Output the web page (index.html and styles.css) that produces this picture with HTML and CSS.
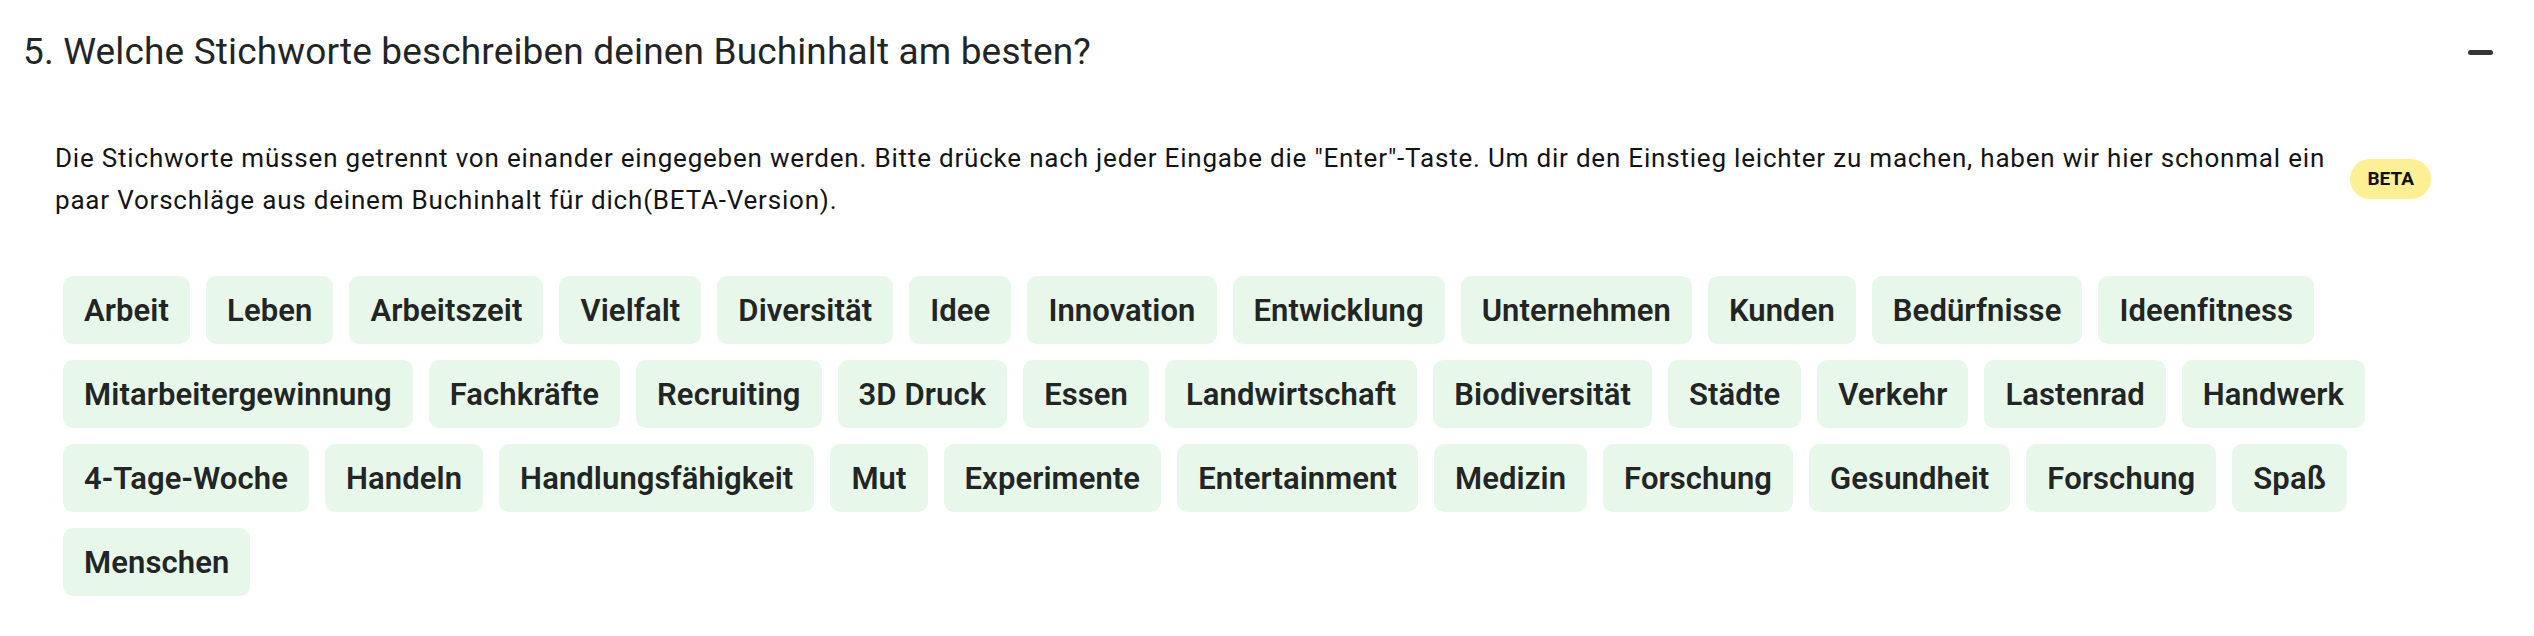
FILE: index.html
```html
<!DOCTYPE html>
<html lang="de">
<head>
<meta charset="utf-8">
<title>Stichworte</title>
<link rel="stylesheet" href="styles.css">
</head>
<body>
<section class="question">
  <header class="q-head">
    <h2 class="q-title">5. Welche Stichworte beschreiben deinen Buchinhalt am besten?</h2>
    <button class="toggle" type="button" aria-label="Einklappen"><span class="minus"></span></button>
  </header>
  <div class="q-body">
    <div class="intro">
      <p class="intro-text">Die Stichworte müssen getrennt von einander eingegeben werden. Bitte drücke nach jeder Eingabe die "Enter"-Taste. Um dir den Einstieg leichter zu machen, haben wir hier schonmal ein paar Vorschläge aus deinem Buchinhalt für dich(BETA-Version).</p>
      <span class="badge">BETA</span>
    </div>
    <ul class="tags">
      <li class="tag">Arbeit</li>
      <li class="tag">Leben</li>
      <li class="tag">Arbeitszeit</li>
      <li class="tag">Vielfalt</li>
      <li class="tag">Diversität</li>
      <li class="tag">Idee</li>
      <li class="tag">Innovation</li>
      <li class="tag">Entwicklung</li>
      <li class="tag">Unternehmen</li>
      <li class="tag">Kunden</li>
      <li class="tag">Bedürfnisse</li>
      <li class="tag">Ideenfitness</li>
      <li class="tag">Mitarbeitergewinnung</li>
      <li class="tag">Fachkräfte</li>
      <li class="tag">Recruiting</li>
      <li class="tag">3D Druck</li>
      <li class="tag">Essen</li>
      <li class="tag">Landwirtschaft</li>
      <li class="tag">Biodiversität</li>
      <li class="tag">Städte</li>
      <li class="tag">Verkehr</li>
      <li class="tag">Lastenrad</li>
      <li class="tag">Handwerk</li>
      <li class="tag">4-Tage-Woche</li>
      <li class="tag">Handeln</li>
      <li class="tag">Handlungsfähigkeit</li>
      <li class="tag">Mut</li>
      <li class="tag">Experimente</li>
      <li class="tag">Entertainment</li>
      <li class="tag">Medizin</li>
      <li class="tag">Forschung</li>
      <li class="tag">Gesundheit</li>
      <li class="tag">Forschung</li>
      <li class="tag">Spaß</li>
      <li class="tag">Menschen</li>
    </ul>
  </div>
</section>
</body>
</html>
```

FILE: styles.css
```css
* { box-sizing: border-box; }

html, body {
  margin: 0;
  padding: 0;
  background: #ffffff;
}

body {
  font-family: Roboto, "Liberation Sans", Arial, sans-serif;
  color: #222222;
}

.question {
  width: 2534px;
  padding-bottom: 32px;
}

.q-head {
  display: flex;
  align-items: center;
  justify-content: space-between;
  padding: 30px 41px 30px 23px;
}

.q-title {
  margin: 0;
  font-size: 37px;
  line-height: 44px;
  letter-spacing: 0.15px;
  font-weight: 400;
  color: #232525;
}

.toggle {
  border: 0;
  background: transparent;
  padding: 0;
  width: 25px;
  height: 25px;
  display: flex;
  align-items: center;
  justify-content: center;
  cursor: pointer;
}

.minus {
  display: block;
  width: 25px;
  height: 5px;
  border-radius: 3px;
  background: #353535;
}

.q-body {
  padding: 33px 103px 0 55px;
}

.intro {
  display: flex;
  align-items: center;
  justify-content: space-between;
  gap: 12px;
}

.intro-text {
  margin: 0;
  flex: 1;
  font-size: 26px;
  line-height: 42px;
  letter-spacing: 0.8px;
  color: #141414;
}

.badge {
  flex: none;
  height: 40px;
  line-height: 40px;
  padding: 0 17px;
  border-radius: 20px;
  background: #fdef94;
  color: #111111;
  font-size: 19px;
  font-weight: 700;
}

.tags {
  list-style: none;
  margin: 47px 0 0;
  padding: 0;
  display: flex;
  flex-wrap: wrap;
}

.tag {
  margin: 8px;
  padding: 17px 21px 16px;
  font-size: 31px;
  line-height: 35px;
  letter-spacing: 0.1px;
  font-weight: 600;
  color: #232524;
  background: #e7f8ea;
  border-radius: 10px;
}
```
